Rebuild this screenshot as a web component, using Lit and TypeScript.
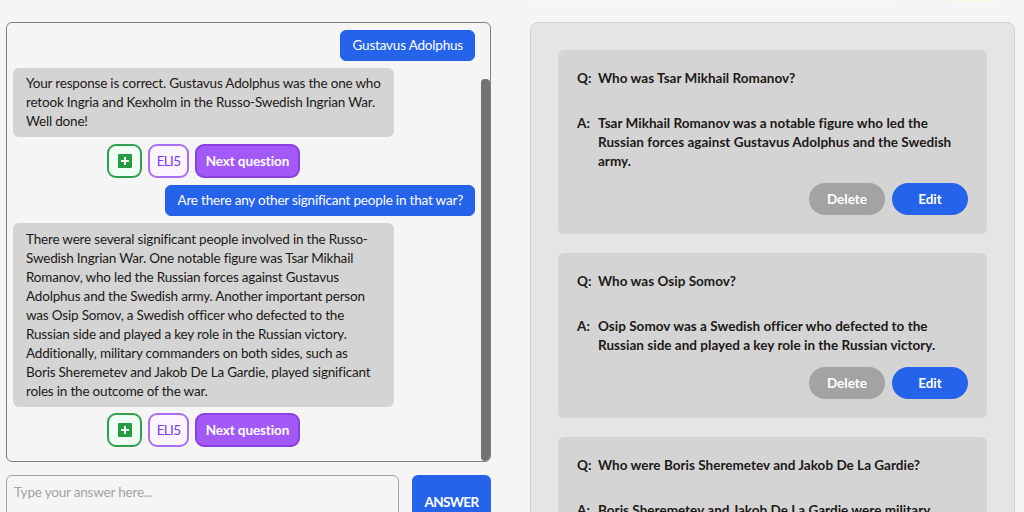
import { LitElement, html, css } from "lit";
import { customElement } from "lit/decorators.js";

const bubbles: { from: "user" | "bot"; lines: string[] }[] = [
  { from: "user", lines: ["Gustavus Adolphus"] },
  {
    from: "bot",
    lines: [
      "Your response is correct. Gustavus Adolphus was the one who",
      "retook Ingria and Kexholm in the Russo-Swedish Ingrian War.",
      "Well done!",
    ],
  },
  { from: "user", lines: ["Are there any other significant people in that war?"] },
  {
    from: "bot",
    lines: [
      "There were several significant people involved in the Russo-",
      "Swedish Ingrian War. One notable figure was Tsar Mikhail",
      "Romanov, who led the Russian forces against Gustavus",
      "Adolphus and the Swedish army. Another important person",
      "was Osip Somov, a Swedish officer who defected to the",
      "Russian side and played a key role in the Russian victory.",
      "Additionally, military commanders on both sides, such as",
      "Boris Sheremetev and Jakob De La Gardie, played significant",
      "roles in the outcome of the war.",
    ],
  },
];

const cards = [
  {
    q: "Who was Tsar Mikhail Romanov?",
    a: [
      "Tsar Mikhail Romanov was a notable figure who led the",
      "Russian forces against Gustavus Adolphus and the Swedish",
      "army.",
    ],
  },
  {
    q: "Who was Osip Somov?",
    a: [
      "Osip Somov was a Swedish officer who defected to the",
      "Russian side and played a key role in the Russian victory.",
    ],
  },
  {
    q: "Who were Boris Sheremetev and Jakob De La Gardie?",
    a: ["Boris Sheremetev and Jakob De La Gardie were military"],
  },
];

@customElement("app-root")
export class AppRoot extends LitElement {
  static styles = css`
    :host {
      display: block;
      width: 1024px;
      height: 512px;
      overflow: hidden;
      background: #f5f5f5;
      font-family: Lato, "Noto Sans", sans-serif;
      font-size: 13.5px;
      letter-spacing: -0.19px;
      line-height: 19px;
      color: #1c1917;
    }
    .strip {
      display: flex;
      height: 1px;
      padding-left: 530px;
    }
    .strip-light {
      width: 370px;
      background: #f9f9f9;
    }
    .strip-warm {
      width: 54px;
      margin-left: 48px;
      background: #fbfbe6;
    }
    .page {
      display: flex;
      height: 511px;
      padding: 21px 9px 0 6px;
      box-sizing: border-box;
      gap: 39px;
      overflow: hidden;
    }
    .left {
      width: 485px;
      flex: none;
      display: flex;
      flex-direction: column;
      gap: 13px;
    }
    .chat {
      position: relative;
      height: 440px;
      flex: none;
      box-sizing: border-box;
      border: 1px solid #808080;
      border-radius: 6px;
      padding: 7px 15px 0 6px;
      display: flex;
      flex-direction: column;
      overflow: hidden;
    }
    .thumb {
      position: absolute;
      right: 0;
      top: 56px;
      bottom: 0;
      width: 9px;
      border-radius: 4px;
      background: #737373;
    }
    .bubble {
      box-sizing: border-box;
      border-radius: 6px;
      white-space: nowrap;
    }
    .user {
      align-self: flex-end;
      background: #2563eb;
      border: 1px solid #1d5fe8;
      color: #fff;
      padding: 5px 11px;
      margin-bottom: 7px;
    }
    .bot {
      width: 381px;
      background: #d4d4d4;
      padding: 6px 13px;
    }
    .long {
      padding-top: 7px;
      margin-bottom: -1px;
    }
    .actions {
      width: 381px;
      display: flex;
      justify-content: center;
      gap: 6px;
      margin: 7px 0;
    }
    .btn {
      box-sizing: border-box;
      height: 34px;
      border-radius: 9px;
      display: flex;
      align-items: center;
      justify-content: center;
    }
    .add {
      width: 35px;
      border: 2px solid #2fa04e;
      background: #f0fdf4;
    }
    .eli {
      width: 41px;
      border: 2px solid #a86ff5;
      background: #faf5ff;
      color: #7c3aed;
      letter-spacing: -0.7px;
    }
    .next {
      width: 105px;
      border: 2px solid #8a3fe0;
      background: #a259f7;
      color: #fff;
      font-weight: 700;
      letter-spacing: -0.1px;
    }
    .entry {
      display: flex;
      gap: 13px;
    }
    .input {
      width: 393px;
      height: 80px;
      flex: none;
      box-sizing: border-box;
      border: 1px solid #a3a3a3;
      border-radius: 6px;
      padding: 7px;
      color: #a3a3a3;
    }
    .answer {
      width: 79px;
      height: 80px;
      flex: none;
      box-sizing: border-box;
      border-radius: 6px;
      background: #2563eb;
      color: #fff;
      font-weight: 700;
      letter-spacing: -0.6px;
      text-align: center;
      padding-top: 18px;
    }
    .right {
      width: 485px;
      height: 560px;
      flex: none;
      box-sizing: border-box;
      border: 1px solid #cfcfcf;
      border-radius: 8px;
      background: #e5e5e5;
      padding: 27px 27px;
      display: flex;
      flex-direction: column;
      gap: 19px;
    }
    .card {
      flex: none;
      background: #d4d4d4;
      border-radius: 6px;
      padding: 19px;
      font-weight: 700;
      letter-spacing: 0.02px;
      white-space: nowrap;
    }
    .row {
      display: flex;
    }
    .row + .row {
      margin-top: 26px;
    }
    .tag {
      width: 21px;
      flex: none;
    }
    .card-actions {
      display: flex;
      justify-content: flex-end;
      gap: 7px;
      margin-top: 12px;
    }
    .pill {
      box-sizing: border-box;
      width: 76px;
      height: 32px;
      border-radius: 16px;
      display: flex;
      align-items: center;
      justify-content: center;
      color: #fff;
    }
    .delete {
      background: #a3a3a3;
    }
    .edit {
      background: #2563eb;
    }
  `;

  private actions() {
    return html`<div class="actions">
      <div class="btn add">
        <svg width="14" height="14" viewBox="0 0 14 14">
          <rect width="14" height="14" rx="1" fill="#259c42" />
          <path d="M7 3v8M3 7h8" stroke="#fff" stroke-width="2" />
        </svg>
      </div>
      <div class="btn eli">ELI5</div>
      <div class="btn next">Next question</div>
    </div>`;
  }

  render() {
    return html`<div class="strip">
        <span class="strip-light"></span><span class="strip-warm"></span>
      </div>
      <div class="page">
        <div class="left">
          <div class="chat">
            ${bubbles.map(
              (b) => html`<div class="bubble ${b.from} ${b.lines.length > 3 ? "long" : ""}">
                  ${b.lines.map((l) => html`<div>${l}</div>`)}
                </div>
                ${b.from === "bot" ? this.actions() : ""}`
            )}
            <div class="thumb"></div>
          </div>
          <div class="entry">
            <div class="input">Type your answer here...</div>
            <div class="answer">ANSWER</div>
          </div>
        </div>
        <div class="right">
          ${cards.map(
            (c) => html`<div class="card">
              <div class="row"><span class="tag">Q:</span><span>${c.q}</span></div>
              <div class="row">
                <span class="tag">A:</span>
                <div>${c.a.map((l) => html`<div>${l}</div>`)}</div>
              </div>
              <div class="card-actions">
                <div class="pill delete">Delete</div>
                <div class="pill edit">Edit</div>
              </div>
            </div>`
          )}
        </div>
      </div>`;
  }
}
